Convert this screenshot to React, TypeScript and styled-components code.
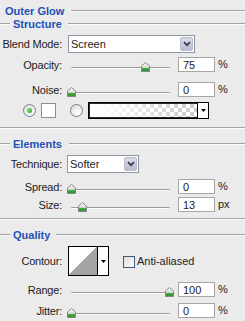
import * as React from 'react';
import styled, { createGlobalStyle } from 'styled-components';

const GlobalStyle = createGlobalStyle`
  html, body {
    margin: 0;
    padding: 0;
    background: #ebebeb;
  }

  body {
    font-family: 'Liberation Sans', Arial, sans-serif;
    font-size: 11px;
    color: #1c1c1c;
  }
`;

type SliderFieldProps = {
  label: string;
  value: string;
  position: number;
  unit: string;
  top: number;
};

const SliderField: React.FC<SliderFieldProps> = ({ label, value, position, unit, top }) => (
  <FieldRow $top={top} $height={15}>
    <Label>{label}</Label>
    <SliderBox>
      <Track />
      <Thumb style={{ left: `${Math.round(position * 98)}px` }}>
        <svg width="9" height="10" viewBox="0 0 9 10">
          <defs>
            <linearGradient id="thumbFill" x1="0" y1="0" x2="0" y2="1">
              <stop offset="0" stopColor="#fbfbfb" />
              <stop offset="0.55" stopColor="#d9dcd9" />
              <stop offset="0.6" stopColor="#4caa4c" />
              <stop offset="1" stopColor="#2e8a2e" />
            </linearGradient>
          </defs>
          <path d="M4.5 0.5 L8.5 4 V9.5 H0.5 V4 Z" fill="url(#thumbFill)" stroke="#7f8a80" strokeWidth="1" />
        </svg>
      </Thumb>
    </SliderBox>
    <NumberBox>{value}</NumberBox>
    <Unit>{unit}</Unit>
  </FieldRow>
);

const Chevron = () => (
  <svg width="8" height="6" viewBox="0 0 8 6">
    <path d="M1 1.2 L4 4.2 L7 1.2" fill="none" stroke="#3b3b4a" strokeWidth="1.8" />
  </svg>
);

const SmallArrow = () => (
  <svg width="5" height="3" viewBox="0 0 5 3">
    <path d="M0 0 H5 L2.5 3 Z" fill="#000" />
  </svg>
);

export default function App() {
  return (
    <Panel>
      <GlobalStyle />

      <TitleRow>
        <HeaderText>Outer Glow</HeaderText>
        <Rule $gap={7} />
      </TitleRow>

      <GroupHeader $top={0}>
        <Rule $width={10} />
        <HeaderText $indent>Structure</HeaderText>
        <Rule $gap={6} />
      </GroupHeader>

      <FieldRow $top={5} $height={18}>
        <Label>Blend Mode:</Label>
        <Select $width={127} $shift={1}>
          <SelectText>Screen</SelectText>
          <ArrowButton>
            <Chevron />
          </ArrowButton>
        </Select>
      </FieldRow>

      <SliderField label="Opacity:" value="75" position={0.75} unit="%" top={4} />
      <SliderField label="Noise:" value="0" position={0} unit="%" top={10} />

      <SwatchRow>
        <Radio $checked />
        <ColorSwatch />
        <Radio $spaced />
        <GradientPicker>
          <GradientFill />
          <PickerArrow>
            <SmallArrow />
          </PickerArrow>
        </GradientPicker>
      </SwatchRow>

      <Separator $top={8} />

      <GroupHeader $top={9}>
        <Rule $width={10} />
        <HeaderText $indent>Elements</HeaderText>
        <Rule $gap={7} />
      </GroupHeader>

      <FieldRow $top={5} $height={18}>
        <Label>Technique:</Label>
        <Select $width={72} $shift={0}>
          <SelectText>Softer</SelectText>
          <ArrowButton>
            <Chevron />
          </ArrowButton>
        </Select>
      </FieldRow>

      <SliderField label="Spread:" value="0" position={0} unit="%" top={6} />
      <SliderField label="Size:" value="13" position={0.11} unit="px" top={3} />

      <Separator $top={6} />

      <GroupHeader $top={9}>
        <Rule $width={10} />
        <HeaderText $indent>Quality</HeaderText>
        <Rule $gap={6} />
      </GroupHeader>

      <FieldRow $top={5} $height={30}>
        <Label>Contour:</Label>
        <ContourPicker>
          <ContourCurve />
          <PickerArrow>
            <SmallArrow />
          </PickerArrow>
        </ContourPicker>
        <Checkbox />
        <CheckLabel>Anti-aliased</CheckLabel>
      </FieldRow>

      <SliderField label="Range:" value="100" position={1} unit="%" top={6} />
      <SliderField label="Jitter:" value="0" position={0} unit="%" top={6} />
    </Panel>
  );
}

const Panel = styled.div`
  width: 245px;
  height: 321px;
  overflow: hidden;
  display: flex;
  flex-direction: column;
`;

const TitleRow = styled.div`
  display: flex;
  align-items: center;
  height: 14px;
  margin-top: 4px;
  padding-left: 5px;
`;

const GroupHeader = styled.div<{ $top: number }>`
  display: flex;
  align-items: center;
  height: 12px;
  margin-top: ${(p) => p.$top}px;
`;

const HeaderText = styled.span<{ $indent?: boolean }>`
  font-weight: bold;
  font-size: 11px;
  line-height: 12px;
  color: #2152b7;
  white-space: nowrap;
  margin-left: ${(p) => (p.$indent ? 3 : 0)}px;
`;

const Rule = styled.div<{ $width?: number; $gap?: number }>`
  flex: ${(p) => (p.$width ? `0 0 ${p.$width}px` : '1 1 auto')};
  margin-left: ${(p) => p.$gap ?? 0}px;
  height: 1px;
  background: #a2a2a2;
  border-bottom: 1px solid #fbfbfb;
`;

const FieldRow = styled.div<{ $top: number; $height: number }>`
  display: flex;
  align-items: center;
  height: ${(p) => p.$height}px;
  margin-top: ${(p) => p.$top}px;
`;

const Label = styled.label`
  flex: 0 0 62px;
  margin-right: 5px;
  text-align: right;
  white-space: nowrap;
  letter-spacing: -0.2px;
`;

const Select = styled.div<{ $width: number; $shift: number }>`
  box-sizing: border-box;
  width: ${(p) => p.$width}px;
  height: 18px;
  margin-left: ${(p) => p.$shift}px;
  padding: 1px;
  display: flex;
  align-items: stretch;
  background: #fff;
  border: 1px solid #8d96a3;
`;

const SelectText = styled.span`
  flex: 1;
  padding-left: 1px;
  line-height: 15px;
`;

const ArrowButton = styled.span`
  box-sizing: border-box;
  width: 13px;
  display: flex;
  align-items: center;
  justify-content: center;
  border: 1px solid #b9bccd;
  border-radius: 2px;
  background: linear-gradient(#d9dbe8, #b9bcd1);
`;

const SliderBox = styled.div`
  position: relative;
  flex: 0 0 107px;
  height: 15px;
`;

const Track = styled.div`
  margin: 10px 4px 0;
  height: 1px;
  border-radius: 1px;
  background: #9b9b9b;
  border-bottom: 1px solid #fdfdfd;
`;

const Thumb = styled.div`
  position: absolute;
  top: 5px;
  width: 9px;
  height: 10px;
  line-height: 0;
`;

const NumberBox = styled.div`
  box-sizing: border-box;
  width: 37px;
  height: 15px;
  margin-left: 4px;
  padding-left: 4px;
  line-height: 14px;
  background: #fff;
  border: 1px solid #a6a6a6;
`;

const Unit = styled.span`
  margin-left: 3px;
  margin-top: -2px;
`;

const SwatchRow = styled.div`
  display: flex;
  align-items: center;
  height: 17px;
  margin-top: 5px;
  padding-left: 23px;
`;

const Radio = styled.span<{ $checked?: boolean; $spaced?: boolean }>`
  box-sizing: border-box;
  width: 13px;
  height: 13px;
  margin-left: ${(p) => (p.$spaced ? 14 : 0)}px;
  display: flex;
  align-items: center;
  justify-content: center;
  border-radius: 50%;
  border: 1px solid #6f7f95;
  background: radial-gradient(circle at 65% 70%, #ffffff 0%, #e4e4e0 70%, #d2d2cc 100%);

  &::after {
    content: '';
    display: ${(p) => (p.$checked ? 'block' : 'none')};
    width: 5px;
    height: 5px;
    border-radius: 50%;
    background: radial-gradient(circle at 35% 35%, #7bdc6f, #21a11f);
  }
`;

const ColorSwatch = styled.span`
  box-sizing: border-box;
  width: 15px;
  height: 15px;
  margin-left: 5px;
  background: #fff;
  border: 1px solid #8f8f8f;
`;

const GradientPicker = styled.div`
  box-sizing: border-box;
  width: 121px;
  height: 17px;
  margin-left: 5px;
  display: flex;
  border: 1px solid #000;
  box-shadow: inset 0 0 0 1px #2a2a2a;
`;

const GradientFill = styled.div`
  flex: 1;
  margin: 1px 0 1px 1px;
  background:
    linear-gradient(to right, #fff 8%, rgba(255, 255, 255, 0) 92%),
    repeating-conic-gradient(#cdcdcd 0% 25%, #ffffff 0% 50%) 0 0 / 8px 8px;
`;

const PickerArrow = styled.div`
  flex: 0 0 10px;
  display: flex;
  align-items: center;
  justify-content: center;
  background: #fff;
  border-left: 1px solid #000;
`;

const Separator = styled.div<{ $top: number }>`
  flex: none;
  margin-top: ${(p) => p.$top}px;
  height: 1px;
  background: #a3a3a3;
  border-bottom: 1px solid #fbfbfb;
`;

const ContourPicker = styled.div`
  box-sizing: border-box;
  width: 41px;
  height: 30px;
  margin-left: 1px;
  display: flex;
  border: 1px solid #000;
`;

const ContourCurve = styled.div`
  flex: 1;
  background: linear-gradient(to top left, #a4a4a4 50%, #ffffff 50%);
`;

const Checkbox = styled.span`
  box-sizing: border-box;
  width: 12px;
  height: 12px;
  margin-left: 14px;
  margin-top: 2px;
  border: 1px solid #3a5a80;
  background: linear-gradient(135deg, #dcdcd7, #ffffff);
`;

const CheckLabel = styled.span`
  margin-left: 2px;
  margin-top: 0;
`;
